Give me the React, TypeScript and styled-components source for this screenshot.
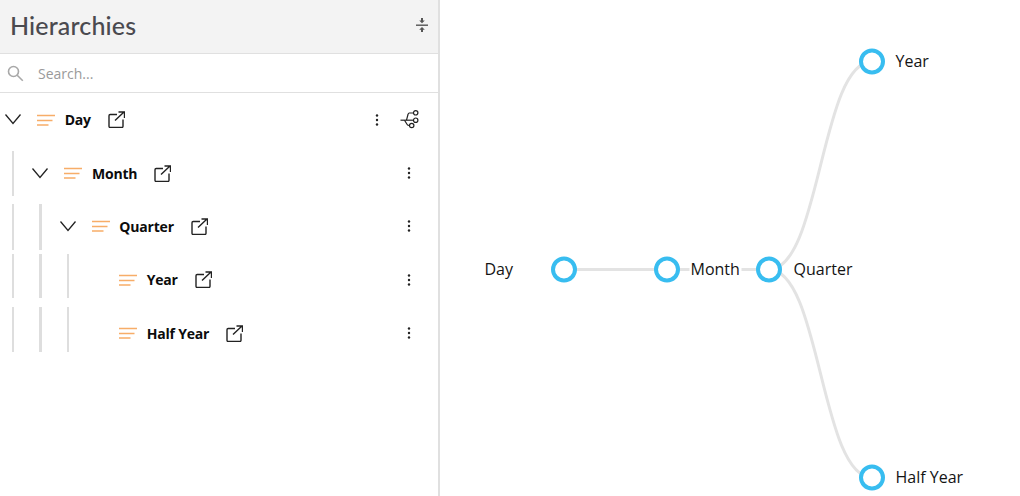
import React from 'react'
import styled, { createGlobalStyle } from 'styled-components'

const GlobalStyle = createGlobalStyle`
  html, body {
    margin: 0;
    padding: 0;
    background: #fff;
  }
  body {
    font-family: 'Open Sans', 'Liberation Sans', sans-serif;
  }
`

type TreeItem = {
  label: string
  level: number
  expandable?: boolean
  guideTop?: number
  guideHeight?: number
}

const items: TreeItem[] = [
  { label: 'Day', level: 0, expandable: true },
  { label: 'Month', level: 1, expandable: true, guideTop: 4.4, guideHeight: 45 },
  { label: 'Quarter', level: 2, expandable: true, guideTop: 4.2, guideHeight: 46 },
  { label: 'Year', level: 3, guideTop: 0.9, guideHeight: 44 },
  { label: 'Half Year', level: 3, guideTop: 0.6, guideHeight: 45 },
]

const nodes = [
  { label: 'Day', x: 564, y: 269.5, textX: 484.5 },
  { label: 'Month', x: 667, y: 269.5, textX: 690.5, masked: true },
  { label: 'Quarter', x: 769, y: 269.5, textX: 793.5 },
  { label: 'Year', x: 872, y: 61.5, textX: 895.5 },
  { label: 'Half Year', x: 872, y: 477.5, textX: 895.5 },
]

const links = [
  'M564 269.5L667 269.5',
  'M667 269.5L769 269.5',
  'M769 269.5C820.5 269.5 820.5 61.5 872 61.5',
  'M769 269.5C820.5 269.5 820.5 477.5 872 477.5',
]

const Chevron = () => (
  <svg width="16" height="11" viewBox="0 0 16 11" fill="none" stroke="#222" strokeWidth="1.3">
    <path d="M0.5 0.5L8 9.5L15.5 0.5" />
  </svg>
)

const LinesIcon = () => (
  <svg width="18" height="12" viewBox="0 0 18 12" stroke="#f7ad68" strokeWidth="1.6">
    <path d="M0 1.5H18M0 6.5H15.5M0 11H11.5" />
  </svg>
)

const ExternalIcon = () => (
  <svg width="17" height="17" viewBox="0 0 17 17" fill="none" stroke="#222" strokeWidth="1.4">
    <path d="M9 3.5H2.2C1.4 3.5 1 3.9 1 4.7V15.3C1 16.1 1.4 16.5 2.2 16.5H13.8C14.6 16.5 15 16.1 15 15.3V8.5" />
    <path d="M7 9.5L16 1M10.5 1H16.5V7" />
  </svg>
)

const DotsIcon = () => (
  <svg width="4" height="12" viewBox="0 0 4 12" fill="#222">
    <circle cx="2" cy="1.5" r="1.2" />
    <circle cx="2" cy="6" r="1.2" />
    <circle cx="2" cy="10.5" r="1.2" />
  </svg>
)

const TreeIcon = () => (
  <svg width="19" height="19" viewBox="0 0 19 19" fill="none" stroke="#222" strokeWidth="1.2">
    <circle cx="15.7" cy="2.8" r="2.2" />
    <circle cx="15.7" cy="10.2" r="2.2" />
    <circle cx="11.7" cy="15.5" r="2.2" />
    <path d="M0.5 10.2H13.4" />
    <path d="M13.4 3H9.2C8.5 3 8.2 3.5 8 4.5L6.5 10.2" />
    <path d="M4.5 10.2L7 14.3C7.5 15.2 8 15.5 9.4 15.5" />
  </svg>
)

const SearchIcon = () => (
  <svg width="17" height="17" viewBox="0 0 17 17" fill="none" stroke="#a8a8a8" strokeWidth="1.6">
    <circle cx="6.5" cy="6.5" r="5" />
    <path d="M10.2 10.2L15.8 15.8" />
  </svg>
)

const CollapseIcon = () => (
  <svg width="12" height="14" viewBox="0 0 12 14" fill="#555">
    <rect x="0" y="6.5" width="12" height="1.4" />
    <path d="M6 5.2L3.2 2.4H5V0H7V2.4H8.8Z" />
    <path d="M6 9L3.2 11.8H5V14H7V11.8H8.8Z" />
  </svg>
)

export default function App() {
  return (
    <>
      <GlobalStyle />
      <Page>
        <SidePanel>
          <PanelHeader>
            <Title>Hierarchies</Title>
            <CollapseIcon />
          </PanelHeader>
          <SearchBar>
            <SearchIcon />
            <SearchInput placeholder="Search..." />
          </SearchBar>
          <Tree>
            {items.map((item, i) => (
              <Row key={item.label}>
                {Array.from({ length: item.level }).map((_, g) => (
                  <GuideSlot key={g}>
                    <Guide $top={item.guideTop ?? 0} $height={item.guideHeight ?? 0} $wide={g === 1} />
                  </GuideSlot>
                ))}
                <ChevronSlot>{item.expandable && <Chevron />}</ChevronSlot>
                <LinesSlot>
                  <LinesIcon />
                </LinesSlot>
                <Label>{item.label}</Label>
                <ExternalSlot>
                  <ExternalIcon />
                </ExternalSlot>
                <RowActions $root={i === 0}>
                  <DotsIcon />
                  {i === 0 && <TreeIcon />}
                </RowActions>
              </Row>
            ))}
          </Tree>
        </SidePanel>
        <Canvas>
          <svg width="580" height="496" viewBox="440 0 580 496">
            {links.map((d) => (
              <path key={d} d={d} fill="none" stroke="#e3e3e3" strokeWidth="3" />
            ))}
            {nodes.map((n) => (
              <g key={n.label}>
                {n.masked && <rect x={n.textX - 1} y={n.y - 12} width="52" height="24" fill="#fff" />}
                <circle cx={n.x} cy={n.y} r="11" fill="#fff" stroke="#38bdf0" strokeWidth="4" />
                <NodeLabel x={n.textX} y={n.y + 5.5}>
                  {n.label}
                </NodeLabel>
              </g>
            ))}
          </svg>
        </Canvas>
      </Page>
    </>
  )
}

const Page = styled.div`
  display: flex;
  width: 1020px;
  height: 496px;
  overflow: hidden;
`

const SidePanel = styled.div`
  width: 438px;
  height: 100%;
  border-right: 2px solid #e0e0e0;
  display: flex;
  flex-direction: column;
`

const PanelHeader = styled.div`
  height: 50px;
  background: #f3f3f3;
  border-bottom: 1px solid #e0e0e0;
  display: flex;
  align-items: center;
  justify-content: space-between;
  padding: 0 10px 3px;
`

const Title = styled.h1`
  margin: 0 0 1px;
  font-family: 'Lato', sans-serif;
  font-size: 25px;
  font-weight: 500;
  letter-spacing: 0.15px;
  color: #4a4a4f;
`

const SearchBar = styled.div`
  height: 38px;
  border-bottom: 1px solid #e0e0e0;
  display: flex;
  align-items: center;
  gap: 14px;
  padding-left: 7px;
`

const SearchInput = styled.input`
  flex: 1;
  border: 0;
  outline: 0;
  padding: 0;
  font-family: 'Open Sans', sans-serif;
  font-size: 14px;
  color: #333;

  &::placeholder {
    color: #9a9a9a;
    opacity: 1;
  }
`

const Tree = styled.div`
  display: flex;
  flex-direction: column;
  padding-top: 0.15px;
`

const Row = styled.div`
  height: 53.33px;
  display: flex;
  align-items: center;
`

const GuideSlot = styled.div`
  width: 27.33px;
  align-self: stretch;
  flex: none;
`

const Guide = styled.div<{ $top: number; $height: number; $wide: boolean }>`
  width: ${(p) => (p.$wide ? 3 : 2)}px;
  height: ${(p) => p.$height}px;
  margin-top: ${(p) => p.$top}px;
  margin-left: 12px;
  background: #dedede;
`

const ChevronSlot = styled.div`
  width: 16px;
  margin-left: 5px;
  display: flex;
  align-items: center;
  flex: none;
`

const LinesSlot = styled.div`
  margin-left: 16px;
  display: flex;
`

const Label = styled.span`
  margin-left: 9.7px;
  font-size: 14px;
  font-weight: 700;
  letter-spacing: -0.2px;
  color: #0c0c0c;
`

const ExternalSlot = styled.div`
  margin-left: 16.8px;
  display: flex;
`

const RowActions = styled.div<{ $root: boolean }>`
  margin-left: auto;
  display: flex;
  align-items: center;
  gap: 21px;
  padding-right: ${(p) => (p.$root ? 19 : 27.5)}px;
`

const Canvas = styled.div`
  flex: 1;
  display: flex;
`

const NodeLabel = styled.text`
  font-family: 'Open Sans', sans-serif;
  font-size: 16px;
  fill: #141414;
`
